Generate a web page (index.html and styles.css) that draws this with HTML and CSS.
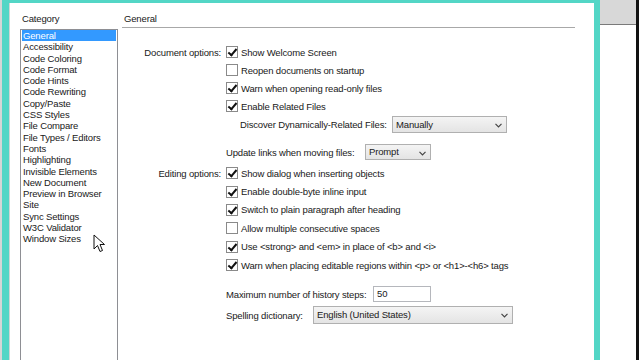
FILE: index.html
```html
<!DOCTYPE html>
<html lang="en">
<head>
    <meta charset="UTF-8">
    <title>Preferences</title>
    <link rel="stylesheet" href="styles.css">
</head>
<body>
<div class="screen">
    <div class="edge-left"></div>
    <div class="dialog">
        <div class="cat">
            <div class="cat-title">Category</div>
            <ul class="cat-list">
                <li class="sel">General</li>
                <li>Accessibility</li>
                <li>Code Coloring</li>
                <li>Code Format</li>
                <li>Code Hints</li>
                <li>Code Rewriting</li>
                <li>Copy/Paste</li>
                <li>CSS Styles</li>
                <li>File Compare</li>
                <li>File Types / Editors</li>
                <li>Fonts</li>
                <li>Highlighting</li>
                <li>Invisible Elements</li>
                <li>New Document</li>
                <li>Preview in Browser</li>
                <li>Site</li>
                <li>Sync Settings</li>
                <li>W3C Validator</li>
                <li>Window Sizes</li>
            </ul>
            <svg class="cursor" width="13" height="19" viewBox="0 0 13 19">
                <path d="M1 1 L1 15 L4.5 11.5 L7 17.5 L9.5 16.5 L7 10.5 L11.5 10.5 Z" fill="#fff" stroke="#111" stroke-width="1" stroke-linejoin="round"/>
            </svg>
        </div>
        <div class="panel">
            <div class="panel-title">General</div>
            <div class="form">
                <div class="row">
                    <div class="lbl">Document options:</div>
                    <div class="ctl"><span class="box on"></span>Show Welcome Screen</div>
                </div>
                <div class="row">
                    <div class="lbl"></div>
                    <div class="ctl"><span class="box"></span>Reopen documents on startup</div>
                </div>
                <div class="row">
                    <div class="lbl"></div>
                    <div class="ctl"><span class="box on"></span>Warn when opening read-only files</div>
                </div>
                <div class="row">
                    <div class="lbl"></div>
                    <div class="ctl"><span class="box on"></span>Enable Related Files</div>
                </div>
                <div class="row tall">
                    <div class="lbl"></div>
                    <div class="ctl indent">
                        <span class="discover-lbl">Discover Dynamically-Related Files:</span>
                        <div class="select w-manual">Manually<svg class="chev" width="7" height="5" viewBox="0 0 7 5"><polyline points="0.5,0.8 3.5,3.8 6.5,0.8" fill="none" stroke="#444" stroke-width="1.2"/></svg></div>
                    </div>
                </div>
                <div class="row gap-update">
                    <div class="lbl"></div>
                    <div class="ctl">
                        <span class="update-lbl">Update links when moving files:</span>
                        <div class="select w-prompt">Prompt<svg class="chev" width="7" height="5" viewBox="0 0 7 5"><polyline points="0.5,0.8 3.5,3.8 6.5,0.8" fill="none" stroke="#444" stroke-width="1.2"/></svg></div>
                    </div>
                </div>
                <div class="row edit first-edit">
                    <div class="lbl">Editing options:</div>
                    <div class="ctl"><span class="box on"></span>Show dialog when inserting objects</div>
                </div>
                <div class="row edit">
                    <div class="lbl"></div>
                    <div class="ctl"><span class="box on"></span>Enable double-byte inline input</div>
                </div>
                <div class="row edit">
                    <div class="lbl"></div>
                    <div class="ctl"><span class="box on"></span>Switch to plain paragraph after heading</div>
                </div>
                <div class="row edit">
                    <div class="lbl"></div>
                    <div class="ctl"><span class="box"></span>Allow multiple consecutive spaces</div>
                </div>
                <div class="row edit">
                    <div class="lbl"></div>
                    <div class="ctl"><span class="box on"></span>Use &lt;strong&gt; and &lt;em&gt; in place of &lt;b&gt; and &lt;i&gt;</div>
                </div>
                <div class="row edit">
                    <div class="lbl"></div>
                    <div class="ctl"><span class="box on"></span>Warn when placing editable regions within &lt;p&gt; or &lt;h1&gt;-&lt;h6&gt; tags</div>
                </div>
                <div class="row gap-history">
                    <div class="lbl"></div>
                    <div class="ctl">
                        <span class="history-lbl">Maximum number of history steps:</span>
                        <div class="input">50</div>
                    </div>
                </div>
                <div class="row gap-spell">
                    <div class="lbl"></div>
                    <div class="ctl">
                        <span class="spell-lbl">Spelling dictionary:</span>
                        <div class="select w-spell">English (United States)<svg class="chev" width="7" height="5" viewBox="0 0 7 5"><polyline points="0.5,0.8 3.5,3.8 6.5,0.8" fill="none" stroke="#444" stroke-width="1.2"/></svg></div>
                    </div>
                </div>
            </div>
        </div>
    </div>
    <div class="side"><div class="side-bar"></div></div>
    <div class="edge-right"></div>
</div>
</body>
</html>
```

FILE: styles.css
```css
* {
    margin: 0;
    padding: 0;
    box-sizing: border-box;
}
body {
    background: #fff;
    font-family: "Liberation Sans", Arial, sans-serif;
    font-size: 9.5px;
    letter-spacing: -0.15px;
    color: #202020;
}
.screen {
    display: flex;
    width: 639px;
    height: 360px;
    overflow: hidden;
}
.edge-left {
    width: 2px;
    background: #d6d6d6;
}
.dialog {
    width: 598px;
    height: 400px;
    display: flex;
    border-left: 7px solid #53d6c6;
    border-top: 3px solid #53d6c6;
    border-right: 6px solid #53d6c6;
    padding: 9px 0 0 11px;
    box-shadow: inset 1px 0 #cfd6d5;
}
.cat {
    width: 98px;
    position: relative;
}
.cat-title {
    height: 14px;
    line-height: 14px;
    padding-left: 2px;
    margin-bottom: 3px;
}
.cat-list {
    list-style: none;
    height: 340px;
    border: 1px solid #8e8f94;
    padding: 0 1px;
}
.cat-list li {
    height: 11.3px;
    line-height: 11.3px;
    padding-left: 1px;
    white-space: nowrap;
}
.cat-list .sel {
    background: #3399ff;
    color: #fff;
}
.cursor {
    position: absolute;
    left: 73px;
    top: 222px;
}
.panel {
    width: 453px;
    margin-left: 4px;
}
.panel-title {
    height: 16px;
    line-height: 14px;
    padding-left: 2px;
    border-bottom: 1px solid #a8a8a8;
}
.form {
    margin-top: 15px;
}
.row {
    display: grid;
    grid-template-columns: 99px 1fr;
    column-gap: 5px;
    height: 18px;
    align-items: center;
}
.row.tall {
    height: 19px;
}
.row.edit {
    height: 18.4px;
}
.gap-update {
    margin-top: 9px;
}
.first-edit {
    margin-top: 3px;
}
.gap-history {
    margin-top: 11px;
}
.gap-spell {
    margin-top: 3px;
}
.lbl {
    text-align: right;
    white-space: nowrap;
}
.ctl {
    display: flex;
    align-items: center;
    white-space: nowrap;
}
.ctl.indent {
    padding-left: 14px;
}
.box {
    width: 12px;
    height: 12px;
    border: 1px solid #8a8a8a;
    background: #fff;
    margin-right: 3px;
    position: relative;
}
.box.on::after {
    content: "";
    position: absolute;
    left: 3px;
    top: 0px;
    width: 3px;
    height: 7px;
    border: solid #111;
    border-width: 0 2px 2px 0;
    transform: rotate(40deg);
}
.discover-lbl {
    width: 148px;
}
.update-lbl {
    width: 134px;
}
.history-lbl {
    width: 143px;
}
.spell-lbl {
    width: 87px;
}
.select {
    position: relative;
    height: 17px;
    line-height: 15px;
    padding-left: 3px;
    border: 1px solid #b0b0b0;
    background: linear-gradient(#f4f4f4, #e4e4e4);
    margin-left: 4px;
}
.chev {
    position: absolute;
    right: 4px;
    top: 6px;
}
.w-manual {
    width: 115px;
}
.w-prompt {
    width: 66px;
    height: 16px;
    line-height: 14px;
    margin-left: 5px;
}
.w-spell {
    width: 200px;
    height: 18px;
    line-height: 16px;
    margin-left: 0;
}
.input {
    width: 58px;
    height: 16px;
    line-height: 14px;
    padding-left: 3px;
    border: 1px solid #b5b7bc;
    background: #fff;
    margin-left: 4px;
}
.side {
    width: 36px;
    background: #fff;
}
.side-bar {
    height: 25px;
    background: #d8d8d8;
    border-bottom: 1px solid #7a7a7a;
}
.edge-right {
    width: 3px;
    background: #111;
}
```
